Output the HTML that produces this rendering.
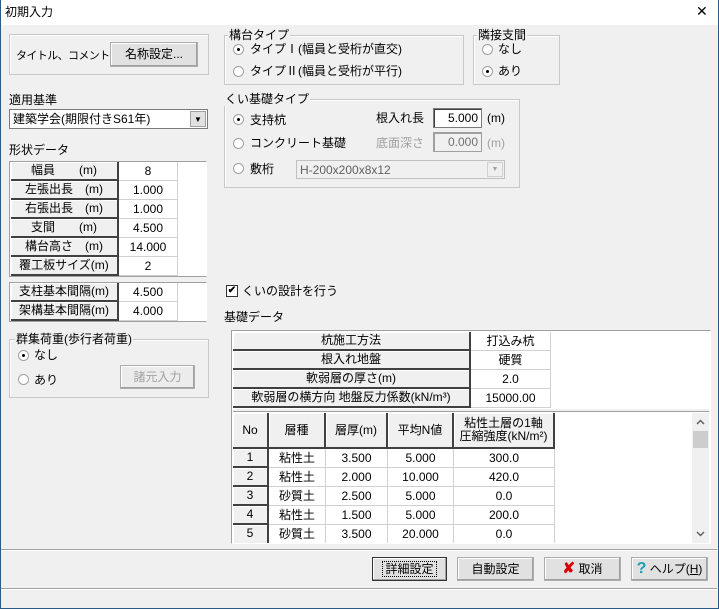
<!DOCTYPE html>
<html><head><meta charset="utf-8"><style>
*{box-sizing:border-box;margin:0;padding:0}
body{width:719px;height:609px;overflow:hidden;background:#f0f0f0;font-family:"Liberation Sans","Noto Sans CJK JP",sans-serif;font-size:12px;color:#000;position:relative}
.a{position:absolute;white-space:nowrap;line-height:14px}
.win{position:absolute;left:0;top:0;width:719px;height:609px;border:1px solid #2a5a85;border-top:none}
.title{position:absolute;left:0;top:0;width:719px;height:25px;background:#fff}
.grp{position:absolute;border:1px solid #c8c8c8;box-shadow:inset 1px 1px 0 #fff}
.gl{position:absolute;top:-8px;left:5px;background:#f0f0f0;padding:0 1px;line-height:14px}
.btn{position:absolute;background:#e1e1e1;border:1px solid #adadad;text-align:center;line-height:20px;box-shadow:inset -1px -1px 0 #a0a0a0,inset 1px 1px 0 #fff}
.rad{position:absolute;width:11px;height:11px;border-radius:50%;background:#fff;border:1px solid #a0a0a0}
.rad.on:after{content:"";position:absolute;left:3px;top:3px;width:3px;height:3px;background:#000;border-radius:50%}
.hd{position:absolute;background:#f0f0f0;border-right:2px solid #404040;border-bottom:2px solid #404040;box-shadow:inset 1px 1px 0 #fff;text-align:center}
.vc{position:absolute;background:#fff;border-right:1px solid #d0d0d0;border-bottom:1px solid #d0d0d0;text-align:center}
.inp{position:absolute;background:#fff;border:1px solid #7a7a7a;box-shadow:inset 1px 1px 0 #404040}
</style></head><body>
<div class="title"></div>
<div class="a" style="left:5px;top:5px">初期入力</div>
<div class="a" style="left:696px;top:5px;font-size:14px;font-family:'DejaVu Sans',sans-serif;font-weight:normal">✕</div>

<div class="grp" style="left:9px;top:34px;width:200px;height:41px"></div>
<div class="a" style="left:16px;top:49px;font-size:11px;letter-spacing:-0.6px">タイトル、コメント</div>
<div class="btn" style="left:110px;top:42px;width:88px;height:25px;line-height:22px">名称設定...</div>

<div class="a" style="left:9px;top:93px">適用基準</div>
<div class="inp" style="left:9px;top:109px;width:199px;height:20px;box-shadow:none;border-color:#7a7a7a"><span class="a" style="left:3px;top:2px">建築学会(期限付きS61年)</span>
<div style="position:absolute;right:1px;top:1px;width:16px;height:16px;background:#e1e1e1;border:1px solid #a0a0a0;font-size:8px;text-align:center;line-height:15px">▼</div></div>

<div class="a" style="left:9px;top:143px">形状データ</div>
<div style="position:absolute;left:9px;top:161px;width:198px;height:116px;background:#fff;border:1px solid #a0a0a0;border-right-color:#fff"></div>
<div class="hd" style="left:11px;top:162px;width:108px;height:19px;line-height:17px">幅員　　(m)</div><div class="vc" style="left:119px;top:162px;width:59px;height:19px;line-height:18px">8</div>
<div class="hd" style="left:11px;top:181px;width:108px;height:19px;line-height:17px">左張出長　(m)</div><div class="vc" style="left:119px;top:181px;width:59px;height:19px;line-height:18px">1.000</div>
<div class="hd" style="left:11px;top:200px;width:108px;height:19px;line-height:17px">右張出長　(m)</div><div class="vc" style="left:119px;top:200px;width:59px;height:19px;line-height:18px">1.000</div>
<div class="hd" style="left:11px;top:219px;width:108px;height:19px;line-height:17px">支間　　(m)</div><div class="vc" style="left:119px;top:219px;width:59px;height:19px;line-height:18px">4.500</div>
<div class="hd" style="left:11px;top:238px;width:108px;height:19px;line-height:17px">構台高さ　(m)</div><div class="vc" style="left:119px;top:238px;width:59px;height:19px;line-height:18px">14.000</div>
<div class="hd" style="left:11px;top:257px;width:108px;height:19px;line-height:17px">覆工板サイズ(m)</div><div class="vc" style="left:119px;top:257px;width:59px;height:19px;line-height:18px">2</div>

<div style="position:absolute;left:9px;top:282px;width:198px;height:40px;background:#fff;border:1px solid #a0a0a0;border-right-color:#fff"></div>
<div class="hd" style="left:11px;top:283px;width:108px;height:19px;line-height:17px">支柱基本間隔(m)</div><div class="vc" style="left:119px;top:283px;width:59px;height:19px;line-height:18px">4.500</div>
<div class="hd" style="left:11px;top:302px;width:108px;height:19px;line-height:17px">架構基本間隔(m)</div><div class="vc" style="left:119px;top:302px;width:59px;height:19px;line-height:18px">4.000</div>

<div class="grp" style="left:9px;top:339px;width:200px;height:59px"><span class="gl">群集荷重(歩行者荷重)</span></div>
<div class="rad on" style="left:18px;top:350px"></div><div class="a" style="left:34px;top:348px">なし</div>
<div class="rad" style="left:18px;top:374px"></div><div class="a" style="left:34px;top:373px">あり</div>
<div class="btn" style="left:120px;top:365px;width:75px;height:24px;color:#a0a0a0;background:#ececec;line-height:22px">諸元入力</div>

<div class="grp" style="left:224px;top:35px;width:240px;height:50px"><span class="gl" style="left:3px">構台タイプ</span></div>
<div class="rad on" style="left:233px;top:44px"></div><div class="a" style="left:250px;top:42px">タイプⅠ(幅員と受桁が直交)</div>
<div class="rad" style="left:233px;top:66px"></div><div class="a" style="left:250px;top:64px">タイプⅡ(幅員と受桁が平行)</div>

<div class="grp" style="left:473px;top:35px;width:87px;height:50px"><span class="gl" style="left:3px">隣接支間</span></div>
<div class="rad" style="left:482px;top:44px"></div><div class="a" style="left:498px;top:42px">なし</div>
<div class="rad on" style="left:482px;top:66px"></div><div class="a" style="left:498px;top:64px">あり</div>

<div class="grp" style="left:224px;top:99px;width:296px;height:89px"><span class="gl" style="left:-1px">くい基礎タイプ</span></div>
<div class="rad on" style="left:233px;top:114px"></div><div class="a" style="left:250px;top:113px">支持杭</div>
<div class="a" style="left:376px;top:111px">根入れ長</div>
<div class="inp" style="left:433px;top:108px;width:49px;height:20px"><span class="a" style="right:3px;top:2px">5.000</span></div>
<div class="a" style="left:487px;top:111px">(m)</div>
<div class="rad" style="left:233px;top:138px"></div><div class="a" style="left:250px;top:136px">コンクリート基礎</div>
<div class="a" style="left:376px;top:136px;color:#a0a0a0">底面深さ</div>
<div class="inp" style="left:433px;top:132px;width:49px;height:20px;background:#f0f0f0;border-color:#a0a0a0;box-shadow:inset 1px 1px 0 #a0a0a0"><span class="a" style="right:3px;top:2px;color:#707070">0.000</span></div>
<div class="a" style="left:487px;top:136px;color:#a0a0a0">(m)</div>
<div class="rad" style="left:233px;top:163px"></div><div class="a" style="left:250px;top:162px">敷桁</div>
<div class="inp" style="left:296px;top:160px;width:209px;height:19px;background:#f0f0f0;border-color:#c0c0c0;box-shadow:none"><span class="a" style="left:3px;top:2px;color:#606060">H-200x200x8x12</span>
<div style="position:absolute;right:1px;top:1px;width:16px;height:15px;border:1px solid #d0d0d0;font-size:7px;color:#a0a0a0;text-align:center;line-height:14px">▼</div></div>

<div style="position:absolute;left:226px;top:285px;width:12px;height:12px;background:#fff;border:1px solid #333;font-size:10px;line-height:10px;text-align:center;font-weight:bold">✔</div>
<div class="a" style="left:242px;top:284px">くいの設計を行う</div>
<div class="a" style="left:224px;top:310px">基礎データ</div>

<div style="position:absolute;left:231px;top:330px;width:480px;height:214px;background:#fff;border:1px solid #a0a0a0;border-right-color:#fff;border-bottom-color:#fff"></div>
<div class="hd" style="left:233px;top:332px;width:238px;height:19px;line-height:17px">杭施工方法</div><div class="vc" style="left:471px;top:332px;width:80px;height:19px;line-height:18px">打込み杭</div>
<div class="hd" style="left:233px;top:351px;width:238px;height:19px;line-height:17px">根入れ地盤</div><div class="vc" style="left:471px;top:351px;width:80px;height:19px;line-height:18px">硬質</div>
<div class="hd" style="left:233px;top:370px;width:238px;height:19px;line-height:17px">軟弱層の厚さ(m)</div><div class="vc" style="left:471px;top:370px;width:80px;height:19px;line-height:18px">2.0</div>
<div class="hd" style="left:233px;top:389px;width:238px;height:19px;line-height:17px">軟弱層の横方向 地盤反力係数(kN/m³)</div><div class="vc" style="left:471px;top:389px;width:80px;height:19px;line-height:18px">15000.00</div>
<div style="position:absolute;left:233px;top:409px;width:476px;height:3px;background:#f0f0f0;border-bottom:1px solid #a0a0a0"></div>

<div class="hd" style="left:233px;top:413px;width:36px;height:36px;line-height:34px">No</div>
<div class="hd" style="left:269px;top:413px;width:57px;height:36px;line-height:34px">層種</div>
<div class="hd" style="left:326px;top:413px;width:62px;height:36px;line-height:34px">層厚(m)</div>
<div class="hd" style="left:388px;top:413px;width:66px;height:36px;line-height:34px">平均N値</div>
<div class="hd" style="left:454px;top:413px;width:101px;height:36px;line-height:13px;padding-top:4px">粘性土層の1軸<br>圧縮強度(kN/m²)</div>

<div class="hd" style="left:233px;top:449px;width:36px;height:19px;line-height:17px">1</div><div class="vc" style="left:269px;top:449px;width:57px;height:19px;line-height:18px">粘性土</div><div class="vc" style="left:326px;top:449px;width:62px;height:19px;line-height:18px">3.500</div><div class="vc" style="left:388px;top:449px;width:66px;height:19px;line-height:18px">5.000</div><div class="vc" style="left:454px;top:449px;width:101px;height:19px;line-height:18px">300.0</div>
<div class="hd" style="left:233px;top:468px;width:36px;height:19px;line-height:17px">2</div><div class="vc" style="left:269px;top:468px;width:57px;height:19px;line-height:18px">粘性土</div><div class="vc" style="left:326px;top:468px;width:62px;height:19px;line-height:18px">2.000</div><div class="vc" style="left:388px;top:468px;width:66px;height:19px;line-height:18px">10.000</div><div class="vc" style="left:454px;top:468px;width:101px;height:19px;line-height:18px">420.0</div>
<div class="hd" style="left:233px;top:487px;width:36px;height:19px;line-height:17px">3</div><div class="vc" style="left:269px;top:487px;width:57px;height:19px;line-height:18px">砂質土</div><div class="vc" style="left:326px;top:487px;width:62px;height:19px;line-height:18px">2.500</div><div class="vc" style="left:388px;top:487px;width:66px;height:19px;line-height:18px">5.000</div><div class="vc" style="left:454px;top:487px;width:101px;height:19px;line-height:18px">0.0</div>
<div class="hd" style="left:233px;top:506px;width:36px;height:19px;line-height:17px">4</div><div class="vc" style="left:269px;top:506px;width:57px;height:19px;line-height:18px">粘性土</div><div class="vc" style="left:326px;top:506px;width:62px;height:19px;line-height:18px">1.500</div><div class="vc" style="left:388px;top:506px;width:66px;height:19px;line-height:18px">5.000</div><div class="vc" style="left:454px;top:506px;width:101px;height:19px;line-height:18px">200.0</div>
<div class="hd" style="left:233px;top:525px;width:36px;height:18px;line-height:17px;border-bottom:none">5</div><div class="vc" style="left:269px;top:525px;width:57px;height:18px;line-height:18px;border-bottom:none">砂質土</div><div class="vc" style="left:326px;top:525px;width:62px;height:18px;line-height:18px;border-bottom:none">3.500</div><div class="vc" style="left:388px;top:525px;width:66px;height:18px;line-height:18px;border-bottom:none">20.000</div><div class="vc" style="left:454px;top:525px;width:101px;height:18px;line-height:18px;border-bottom:none">0.0</div>

<div style="position:absolute;left:692px;top:413px;width:17px;height:130px;background:#f0f0f0"></div>
<svg style="position:absolute;left:692px;top:413px" width="17" height="130"><path d="M5 11 L8.5 7.5 L12 11" fill="none" stroke="#606060" stroke-width="1.5"/><path d="M5 119 L8.5 122.5 L12 119" fill="none" stroke="#606060" stroke-width="1.5"/></svg>
<div style="position:absolute;left:693px;top:431px;width:15px;height:17px;background:#cdcdcd"></div>

<div style="position:absolute;left:0;top:549px;width:717px;height:2px;border-top:1px solid #a0a0a0;border-bottom:1px solid #fff"></div>
<div class="btn" style="left:372px;top:557px;width:75px;height:24px;border-color:#333;line-height:22px"><span style="outline:1px dotted #000;padding:0 2px">詳細設定</span></div>
<div class="btn" style="left:457px;top:557px;width:77px;height:24px;line-height:22px">自動設定</div>
<div class="btn" style="left:544px;top:557px;width:77px;height:24px;line-height:22px"><span style="color:#d00;font-weight:bold;font-size:15px">✘</span> 取消</div>
<div class="btn" style="left:631px;top:557px;width:77px;height:24px;line-height:22px"><span style="color:#18a0b0;font-weight:bold;font-size:16px">?</span> ヘルプ(<u>H</u>)</div>
<div style="position:absolute;left:0;top:588px;width:717px;height:2px;border-top:1px solid #a0a0a0;border-bottom:1px solid #fff"></div>
<div class="win"></div>
</body></html>
